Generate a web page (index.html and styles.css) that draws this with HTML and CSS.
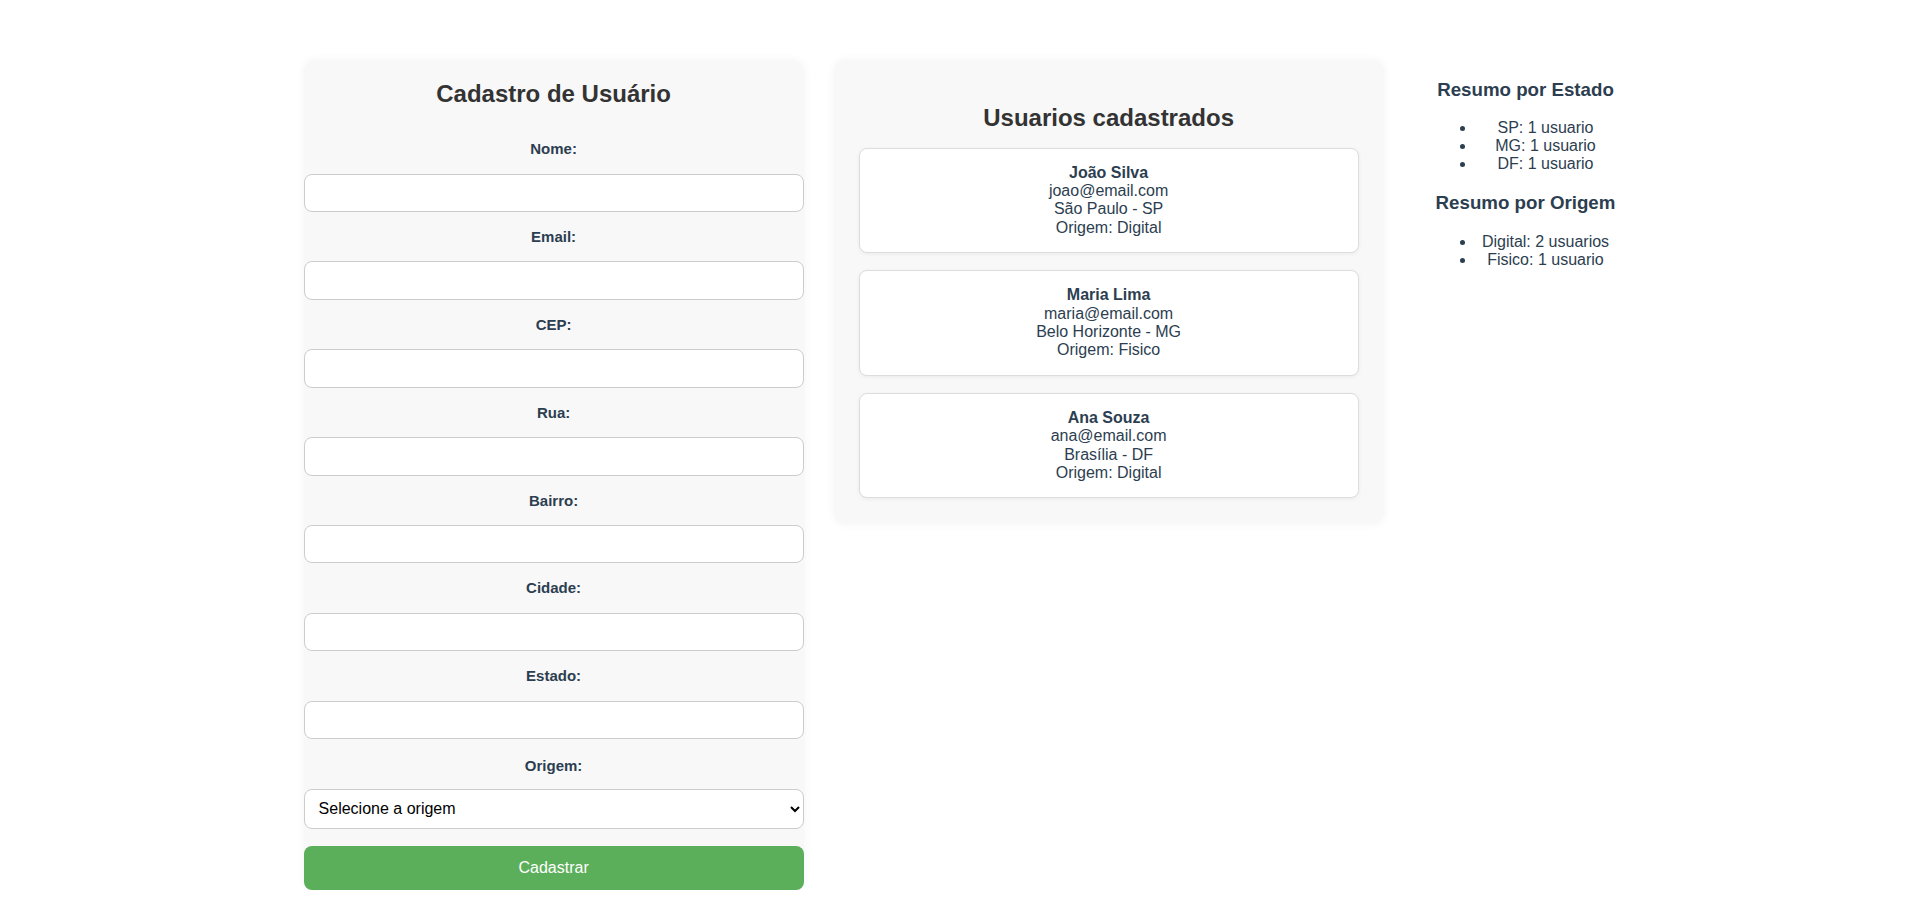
FILE: index.html
```html
<!DOCTYPE html>
<html lang="pt-BR">
<head>
<meta charset="UTF-8">
<title>Cadastro de Usuário</title>
<link rel="stylesheet" href="styles.css">
</head>
<body>
<main class="page">
  <form class="form-card">
    <h2 class="form-title">Cadastro de Usuário</h2>
    <label class="field-label" for="nome">Nome:</label>
    <input class="field-input" id="nome" type="text">
    <label class="field-label" for="email">Email:</label>
    <input class="field-input" id="email" type="email">
    <label class="field-label" for="cep">CEP:</label>
    <input class="field-input" id="cep" type="text">
    <label class="field-label" for="rua">Rua:</label>
    <input class="field-input" id="rua" type="text">
    <label class="field-label" for="bairro">Bairro:</label>
    <input class="field-input" id="bairro" type="text">
    <label class="field-label" for="cidade">Cidade:</label>
    <input class="field-input" id="cidade" type="text">
    <label class="field-label" for="estado">Estado:</label>
    <input class="field-input" id="estado" type="text">
    <label class="field-label field-label-select" for="origem">Origem:</label>
    <select class="field-select" id="origem">
      <option>Selecione a origem</option>
      <option>Digital</option>
      <option>Fisico</option>
    </select>
    <button class="submit-btn" type="button">Cadastrar</button>
  </form>

  <section class="users-card">
    <h2 class="users-title">Usuarios cadastrados</h2>
    <div class="user-list">
      <div class="user-item">
        <strong>João Silva</strong><br>
        joao@email.com<br>
        São Paulo - SP<br>
        Origem: Digital
      </div>
      <div class="user-item">
        <strong>Maria Lima</strong><br>
        maria@email.com<br>
        Belo Horizonte - MG<br>
        Origem: Fisico
      </div>
      <div class="user-item">
        <strong>Ana Souza</strong><br>
        ana@email.com<br>
        Brasília - DF<br>
        Origem: Digital
      </div>
    </div>
  </section>

  <aside class="summary">
    <h3 class="summary-title">Resumo por Estado</h3>
    <ul class="summary-list">
      <li>SP: 1 usuario</li>
      <li>MG: 1 usuario</li>
      <li>DF: 1 usuario</li>
    </ul>
    <h3 class="summary-title">Resumo por Origem</h3>
    <ul class="summary-list">
      <li>Digital: 2 usuarios</li>
      <li>Fisico: 1 usuario</li>
    </ul>
  </aside>
</main>
</body>
</html>
```

FILE: styles.css
```css
html, body {
  margin: 0;
  padding: 0;
  background: #ffffff;
}

body {
  font-family: "Liberation Sans", Arial, sans-serif;
  font-size: 16px;
  color: #2c3e50;
}

.page {
  display: flex;
  justify-content: center;
  align-items: flex-start;
  gap: 30px;
  padding-top: 60px;
}

/* ---------- form ---------- */
.form-card {
  width: 500px;
  display: flex;
  flex-direction: column;
  background: #f8f8f8;
  border-radius: 12px;
  box-shadow: 0 0 10px rgba(0, 0, 0, 0.05);
}

.form-title {
  margin: 20px 0 16px;
  font-size: 24px;
  font-weight: bold;
  color: #333333;
  text-align: center;
}

.field-label {
  display: block;
  margin: 16px 0 16.5px;
  font-size: 15px;
  font-weight: bold;
  text-align: center;
  color: #2c3e50;
}

.field-label-select {
  margin: 18px 0 14.5px;
}

.field-input {
  box-sizing: border-box;
  width: 100%;
  height: 38.4px;
  margin: 0;
  padding: 9px 10px;
  font-family: "Liberation Sans", Arial, sans-serif;
  font-size: 16px;
  border: 1px solid #cccccc;
  border-radius: 8px;
  background: #ffffff;
}

.field-select {
  box-sizing: border-box;
  width: 100%;
  height: 40px;
  margin: 0;
  padding: 0 10px;
  font-family: "Liberation Sans", Arial, sans-serif;
  font-size: 16px;
  color: #000000;
  border: 1px solid #cccccc;
  border-radius: 8px;
  background: #ffffff;
}

.submit-btn {
  height: 44px;
  margin-top: 17px;
  border: none;
  border-radius: 8px;
  background: #5caf5a;
  color: #ffffff;
  font-family: "Liberation Sans", Arial, sans-serif;
  font-size: 16px;
  cursor: pointer;
}

/* ---------- users ---------- */
.users-card {
  box-sizing: border-box;
  width: 550px;
  padding: 24px 25px 26px;
  background: #f8f8f8;
  border-radius: 12px;
  box-shadow: 0 0 10px rgba(0, 0, 0, 0.05);
  display: flex;
  flex-direction: column;
}

.users-title {
  margin: 20px 0 15.5px;
  font-size: 24px;
  font-weight: bold;
  color: #333333;
  text-align: center;
}

.user-list {
  display: flex;
  flex-direction: column;
  gap: 17px;
}

.user-item {
  padding: 15px;
  background: #ffffff;
  border: 1px solid #dddddd;
  border-radius: 8px;
  box-shadow: 0 1px 4px rgba(0, 0, 0, 0.06);
  text-align: center;
  font-size: 16px;
  line-height: 18.4px;
  color: #2c3e50;
}

/* ---------- summary ---------- */
.summary {
  margin-left: 22px;
  text-align: center;
}

.summary-title {
  font-size: 18.72px;
  margin: 18.72px 0;
  color: #2c3e50;
}

.summary-list {
  margin: 16px 0;
  padding-left: 40px;
}
```
